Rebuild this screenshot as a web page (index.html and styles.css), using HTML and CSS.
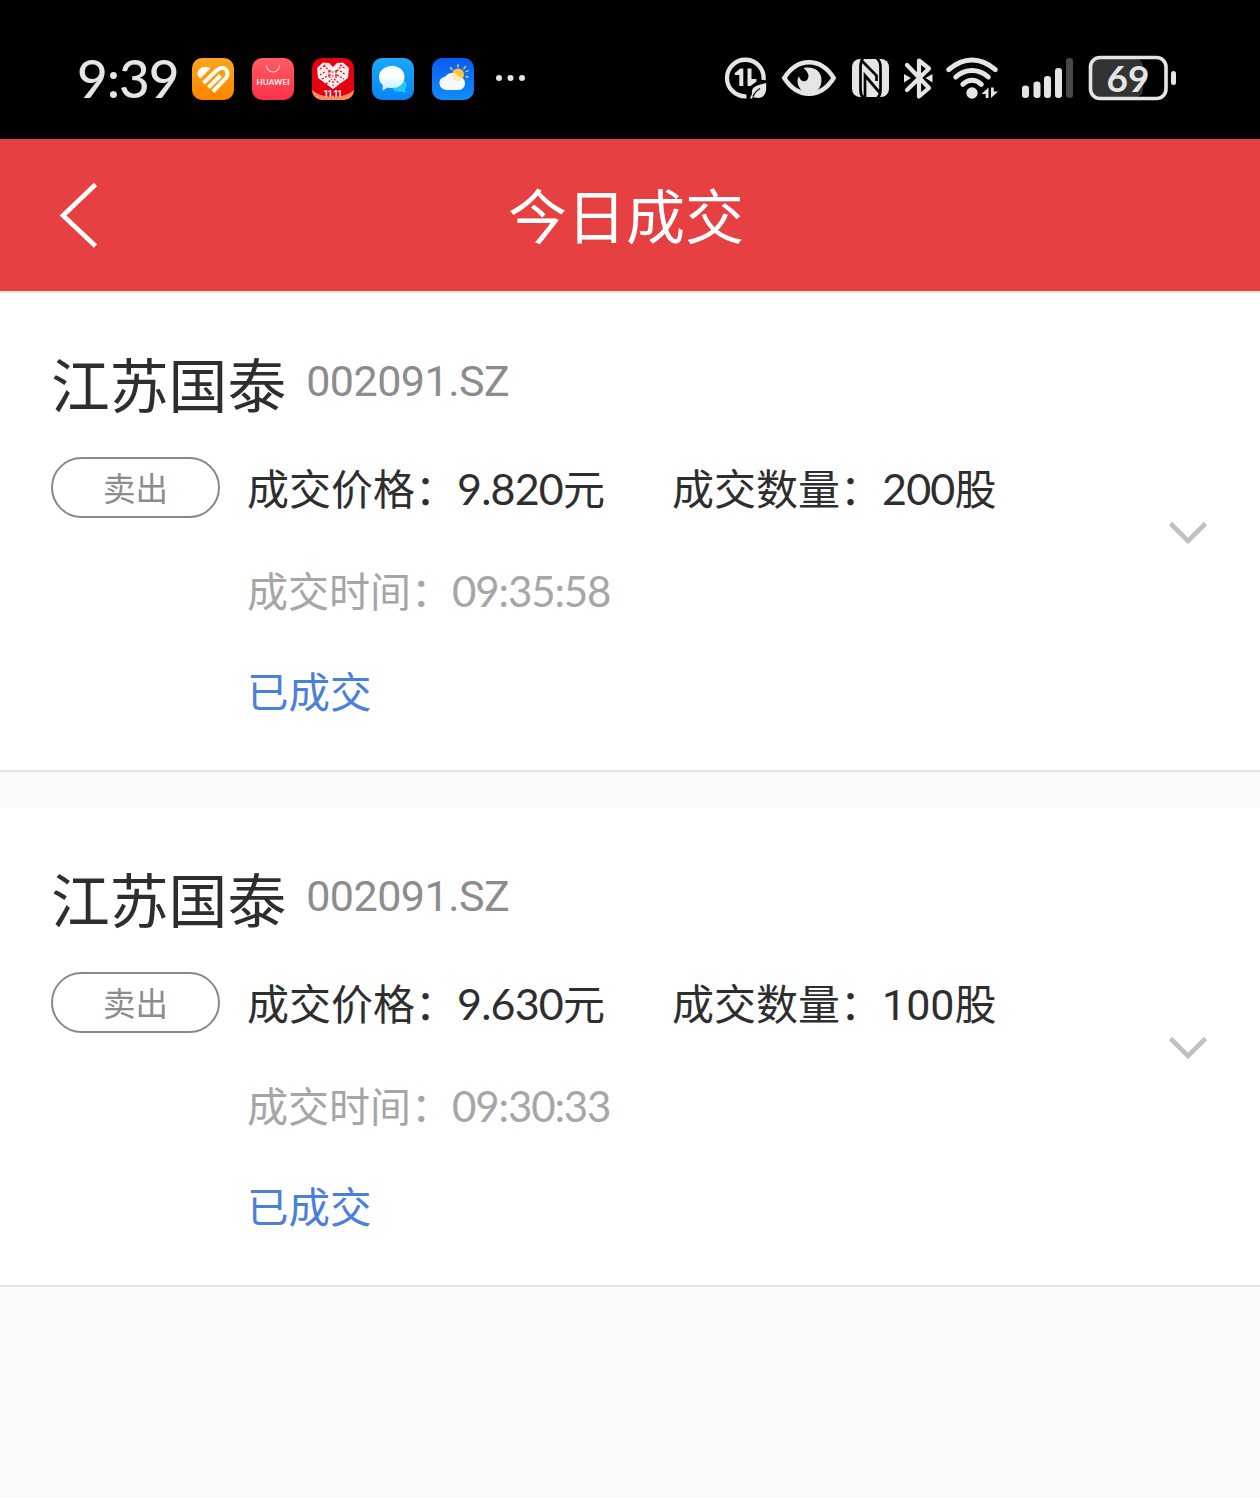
FILE: index.html
```html
<!DOCTYPE html>
<html lang="zh-CN">
<head>
<meta charset="utf-8">
<title>今日成交</title>
<link rel="stylesheet" href="styles.css">
</head>
<body>
<div class="statusbar">
  <div class="status-left">
    <span class="clock">9:39</span>
    <svg class="app" viewBox="0 0 42 42">
      <defs><linearGradient id="orange" x2="0" y2="1"><stop offset="0" stop-color="#ffa51c"/><stop offset="1" stop-color="#fb8500"/></linearGradient></defs>
      <rect width="42" height="42" rx="10" fill="url(#orange)"/>
      <path d="M5.500 16.500C5 11 11 7 17 9.500L18.500 10.500L8.500 20.500Q6 19 5.500 16.500Z" fill="#fffdf0"/>
      <path d="M11.500 25L24.500 12.500Q30.500 7.500 34.300 12Q37 16.500 33.500 20.500L21 33.500M16.500 29.500L28.500 17.500" fill="none" stroke="#fffdf0" stroke-width="4"/>
    </svg>
    <svg class="app" viewBox="0 0 42 42">
      <defs><linearGradient id="coral" x2="0" y2="1"><stop offset="0" stop-color="#ff5c62"/><stop offset="1" stop-color="#fa3149"/></linearGradient></defs>
      <rect width="42" height="42" rx="10" fill="url(#coral)"/>
      <path d="M14.500 7.500a6.500 6.500 0 0 0 13 0" fill="none" stroke="#ffd9da" stroke-width="1.100"/>
      <text x="21" y="26.600" text-anchor="middle" textLength="33" class="brand">HUAWEI</text>
    </svg>
    <svg class="app" viewBox="0 0 42 42">
      <defs><clipPath id="tile"><rect width="42" height="42" rx="10"/></clipPath></defs>
      <g clip-path="url(#tile)">
        <rect width="42" height="42" fill="#e60012"/>
        <path d="M0 32Q8 39 21 39T42 32V42H0Z" fill="#ff8a5c"/>
      </g>
      <path d="M5 10L11 4.500L17 5L21 9L25 5L31 4.500L37 10L36 20L21 31L6 20Z" fill="#fff0ef"/>
      <path d="M8 11l6-4M12 7l5 6M8 17l6-4M10 21l7-4M14 26l6-5M28 7l6 4M25 13l5-6M28 13l6 4M25 17l7 4M22 21l6 5M18 12v8M24 12v8M16 14h10M16 18h10M21 23v5" stroke="#e60012" stroke-width="1.200" stroke-dasharray="2 1.500"/>
      <text x="21" y="39" text-anchor="middle" textLength="19" class="sale">11.11</text>
    </svg>
    <svg class="app" viewBox="0 0 42 42">
      <defs><linearGradient id="sky" x2="0" y2="1"><stop offset="0" stop-color="#19a8fb"/><stop offset="1" stop-color="#0784f4"/></linearGradient><linearGradient id="bubble" x2="0" y2="1"><stop offset=".4" stop-color="#fff"/><stop offset="1" stop-color="#c3ebff"/></linearGradient></defs>
      <rect width="42" height="42" rx="10" fill="url(#sky)"/>
      <path d="M31 22c4 2 5 6 2 9l1 4-5-1.500c-5 1-8-1-9-4z" fill="#26c7f8"/>
      <path d="M20 8c8 0 12.500 5 12.500 11S28 30 20 30q-2 0-4-.6L10.500 32.500 10.800 27Q7 24 7 19C7 13 12 8 20 8z" fill="url(#bubble)"/>
    </svg>
    <svg class="app" viewBox="0 0 42 42">
      <defs><linearGradient id="blue" x2="0" y2="1"><stop offset="0" stop-color="#085cf2"/><stop offset="1" stop-color="#118cf8"/></linearGradient></defs>
      <rect width="42" height="42" rx="10" fill="url(#blue)"/>
      <path d="M26 6.500v2.500M18.500 9.500l1.500 2M33.500 8.500l-1.800 2.300M34 18.500l2.200.6M34 13.500l2-.6" stroke="#f5cf70" stroke-width="1.300" stroke-linecap="round"/>
      <circle cx="26" cy="16.500" r="6" fill="#ffc62d"/>
      <path d="M14 32a7 7 0 0 1-6.500-7c0-4 3-6 6-6.500C15 16 17.500 15 20 15c4 0 6.500 2 7.500 4.500C31 19.500 33 22 33 25.500 33 29 30 32 27 32z" fill="#f5faff"/>
      <path d="M20 15.500a6.300 6.300 0 0 0 11.500 4.800Q30 19.500 27.500 19.500 25.500 15 20 15z" fill="#ffe3a0" opacity=".7"/>
    </svg>
    <svg class="more" viewBox="0 0 30 8"><circle cx="4" cy="4" r="3"/><circle cx="15.500" cy="4" r="3"/><circle cx="27" cy="4" r="3"/></svg>
  </div>
  <div class="status-right">
    <svg width="54" height="56" viewBox="720 50 54 56">
      <path d="M746.500 96.300A18.300 18.300 0 1 1 763.500 80" fill="none" stroke="#e5e5e5" stroke-width="4.300"/>
      <path d="M739.300 86V75h-4.500v-2l5.500-4.500h3V86z" fill="#e5e5e5"/>
      <path d="M747.500 68.500h4V79h5v2.500l-6 4.500h-3z" fill="#e5e5e5"/>
      <path d="M766 83c1 9-1 15-8 15-3 0-4-1-5-1l-2 2-1-1 2-4c-1-7 4-9 14-11z" fill="#e5e5e5" stroke="#000" stroke-width="3" paint-order="stroke"/>
      <path d="M753 96.500q2-5 7-8" fill="none" stroke="#000" stroke-width="1.300"/>
    </svg>
    <svg width="70" height="56" viewBox="774 50 70 56">
      <path d="M784.300 78C790 69 798 62.300 809 62.300S828 69 833.700 78C828 87 820 93.700 809 93.700S790 87 784.300 78z" fill="none" stroke="#e5e5e5" stroke-width="4.400"/>
      <path d="M803.500 68C815 66 821.500 72 821.500 80c0 8-5.500 13-12 13s-12-5-12-12c0-2 .5-3 1.500-4.500 1 4 4 5.500 6.500 4.500 4-1.500 4.500-8-2-13z" fill="#e5e5e5"/>
    </svg>
    <svg width="52" height="56" viewBox="844 50 52 56">
      <rect x="852" y="59" width="37" height="38" rx="8" fill="#e5e5e5"/>
      <path d="M863 58Q860.500 61 860.500 67V90Q860.500 95 863.500 98M861.500 60.500L876.500 75.500V81M865 97V75.500L880 93M876.500 58Q880.500 61 880.500 67V90Q880.500 95 877.500 98" fill="none" stroke="#000" stroke-width="2.700"/>
    </svg>
    <svg width="44" height="56" viewBox="896 50 44 56">
      <path d="M907 65L929 88L919 96.500V60.500L929 68.500L907 90" fill="none" stroke="#e5e5e5" stroke-width="4.200" stroke-linecap="round" stroke-linejoin="round"/>
      <path d="M904 74l7 4-7 4.500zM932.500 74l-7 4 7 4.500z" fill="#e5e5e5"/>
    </svg>
    <svg width="70" height="56" viewBox="940 50 70 56">
      <path d="M948.700 69.700Q960 60 972 60T995.300 69.700M955.800 77Q963 70.500 972 70.500T988.300 77M962.800 84.300Q967 80.300 972 80.300T981.300 84.300" fill="none" stroke="#e5e5e5" stroke-width="5" stroke-linecap="round"/>
      <circle cx="972" cy="93" r="5.700" fill="#e5e5e5"/>
      <path d="M988.500 87.500V98h-2.800v-4h-4.200zM991 98V87.500h2.800v4h4.200z" fill="#e5e5e5"/>
    </svg>
    <svg width="70" height="56" viewBox="1010 50 70 56">
      <g fill="#e5e5e5"><rect x="1022" y="85.500" width="7" height="12.500" rx="3.200"/><rect x="1033.500" y="81.500" width="7" height="16.500" rx="3.200"/><rect x="1044" y="76" width="7" height="22" rx="3.200"/><rect x="1055" y="68" width="7" height="30" rx="3.200"/></g>
      <rect x="1066" y="58" width="7" height="40" rx="3.200" fill="#484848"/>
    </svg>
    <svg width="100" height="56" viewBox="1080 50 100 56">
      <rect x="1092" y="59" width="51" height="38" rx="7" fill="#333"/>
      <rect x="1090.500" y="57.500" width="75.500" height="41" rx="9.500" fill="none" stroke="#e5e5e5" stroke-width="3.600"/>
      <rect x="1171" y="71" width="5" height="14" rx="2.500" fill="#e5e5e5"/>
      <text x="1128" y="92" text-anchor="middle" textLength="43" class="level">69</text>
    </svg>
  </div>
</div>
<header class="titlebar">
  <svg class="back" viewBox="0 0 40 68"><path d="M37.500 3.500L5 34.500L37.500 65" fill="none" stroke="#fff" stroke-width="4.600"/></svg>
  <h1 class="title">今日成交</h1>
</header>
<main class="trades">
  <article class="trade">
    <div class="stock"><span class="name">江苏国泰</span><span class="code">002091.SZ</span></div>
    <div class="detail">
      <span class="side">卖出</span>
      <span class="price">成交价格：<span class="num">9.820</span>元</span>
      <span class="quantity">成交数量：<span class="num">200</span>股</span>
    </div>
    <div class="time">成交时间：<span class="num">09:35:58</span></div>
    <div class="state">已成交</div>
    <svg class="chevron" viewBox="0 0 40 24"><path d="M2.500 2.500L20 20L37.500 2.500" fill="none" stroke="#c0c0c0" stroke-width="4.600"/></svg>
  </article>
  <article class="trade">
    <div class="stock"><span class="name">江苏国泰</span><span class="code">002091.SZ</span></div>
    <div class="detail">
      <span class="side">卖出</span>
      <span class="price">成交价格：<span class="num">9.630</span>元</span>
      <span class="quantity">成交数量：<span class="num plain">100</span>股</span>
    </div>
    <div class="time">成交时间：<span class="num">09:30:33</span></div>
    <div class="state">已成交</div>
    <svg class="chevron" viewBox="0 0 40 24"><path d="M2.500 2.500L20 20L37.500 2.500" fill="none" stroke="#c0c0c0" stroke-width="4.600"/></svg>
  </article>
</main>
</body>
</html>
```
FILE: styles.css
```css
* { box-sizing: border-box; }
body {
  margin: 0;
  min-height: 1498px;
  background: #f8f9fb;
  color: #2e2e2e;
  font-family: "Noto Sans CJK SC", sans-serif;
}
svg { display: block; flex: none; }
.statusbar {
  height: 139px;
  padding: 50px 80px 33px 77px;
  display: flex;
  justify-content: space-between;
  background: #000;
}
.status-left { display: flex; align-items: center; gap: 18px; }
.status-right { display: flex; }
.clock {
  width: 97px;
  font: 500 53px/58px Lato, sans-serif;
  letter-spacing: -1px;
  color: #e5e5e5;
  white-space: nowrap;
}
.app { width: 42px; height: 42px; margin-top: 2px; }
.more { width: 30px; height: 8px; margin-left: 3px; fill: #e5e5e5; }
.brand { font: 700 8px Lato, sans-serif; fill: #fff0f0; }
.sale { font: 700 9px Roboto, sans-serif; fill: #fff; }
.level { font: 700 37px Lato, sans-serif; fill: #e5e5e5; }

.titlebar {
  height: 154px;
  padding: 0 60px 0 58px;
  display: grid;
  grid-template-columns: 40px 1fr 46px;
  align-items: center;
  background: #e64042;
  border-bottom: 2px solid #fbdcdf;
}
.back { width: 40px; height: 68px; }
.title {
  margin: 0;
  padding-bottom: 3px;
  text-align: center;
  font-size: 59px;
  font-weight: 400;
  line-height: 80px;
  color: #fff;
}

.trades { display: flex; flex-direction: column; gap: 36px; }
.trade {
  height: 479px;
  padding: 62px 52px 0 51px;
  display: grid;
  grid-template-columns: 1fr 40px;
  grid-template-rows: 60px 61px 60px 60px;
  row-gap: 42px;
  background: #fff;
  border-bottom: 2px solid #e3e4e6;
}
.trade > * { grid-column: 1; }
.stock { display: flex; align-items: center; line-height: 56px; }
.name { margin-top: -4px; font-size: 58.800px; }
.code {
  margin: -8px 0 0 20px;
  font-family: Roboto, sans-serif;
  font-size: 43px;
  letter-spacing: -0.5px;
  color: #8c8c8c;
}
.detail {
  display: grid;
  grid-template-columns: 169px 398px 1fr;
  column-gap: 27px;
  font-size: 42px;
  line-height: 59px;
  white-space: nowrap;
}
.side {
  height: 61px;
  border: 2px solid #888;
  border-radius: 31px;
  text-align: center;
  font-size: 32.500px;
  line-height: 55px;
  color: #8c8c8c;
}
.num { font-family: Lato, sans-serif; font-size: 43px; letter-spacing: -0.8px; }
.plain { font-family: Roboto, sans-serif; letter-spacing: 0; }
.time { padding-left: 196px; font-size: 41px; line-height: 58px; color: #a6a6a6; }
.time .num { font-size: 42px; letter-spacing: -1.1px; }
.state { padding-left: 196px; font-size: 41.500px; line-height: 56px; color: #4a80d9; }
.chevron {
  grid-area: 1 / 2 / 5 / 3;
  align-self: center;
  width: 40px;
  height: 24px;
  margin-bottom: 12px;
}
```
